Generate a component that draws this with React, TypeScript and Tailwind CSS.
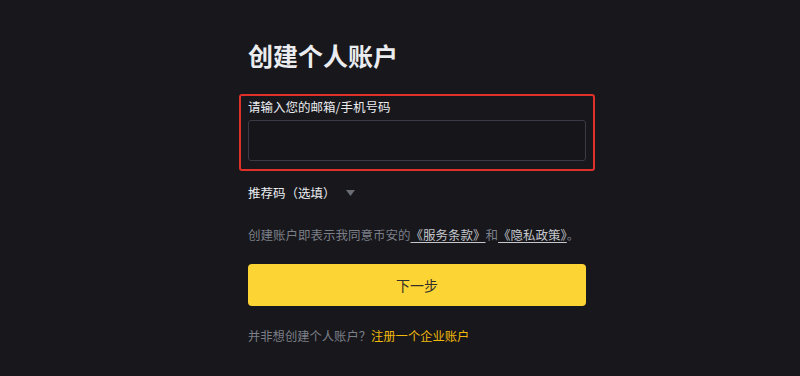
export default function App() {
  return (
    <div
      className="h-[376px] w-[800px] bg-[#17171c] overflow-hidden"
      style={{ fontFamily: '"Noto Sans CJK SC", "Noto Sans", sans-serif' }}
    >
      <div className="ml-[248px] w-[338px] pt-[39px] flex flex-col">
        <h1 className="text-[25px] leading-[32px] font-bold text-[#eaecef]">创建个人账户</h1>

        <div className="mt-[23px] -mx-[9px] border-2 border-[#e0302a] rounded-[3px] px-[7px] pt-[3px] pb-[8px]">
          <div className="text-[12.5px] leading-[16px] text-[#eaecef]">请输入您的邮箱/手机号码</div>
          <div className="mt-[5px] h-[41px] rounded-[3px] border border-[#3a3b44] bg-[#15151a]" />
        </div>

        <div className="mt-[13px] flex items-center h-[18px] text-[12.5px] text-[#eaecef]">
          <span>推荐码（选填）</span>
          <svg className="ml-[10px]" width="9" height="6" viewBox="0 0 9 6">
            <path d="M0 0 H9 L4.5 6 Z" fill="#6b6d75" />
          </svg>
        </div>

        <div className="mt-[24px] text-[12.5px] leading-[18px] text-[#7c7f87] whitespace-nowrap">
          创建账户即表示我同意币安的
          <span className="text-[#c5c7cc] underline underline-offset-2">《服务条款》</span>和
          <span className="text-[#c5c7cc] underline underline-offset-2">《隐私政策》</span>。
        </div>

        <button className="mt-[20px] h-[42px] w-full rounded-[4px] bg-[#fcd535] text-[14px] text-[#33302a] flex items-center justify-center">
          下一步
        </button>

        <div className="mt-[21px] text-[12.3px] leading-[18px] text-[#7c7f87] whitespace-nowrap">
          并非想创建个人账户？<span className="text-[#f0b90b]">注册一个企业账户</span>
        </div>
      </div>
    </div>
  );
}
